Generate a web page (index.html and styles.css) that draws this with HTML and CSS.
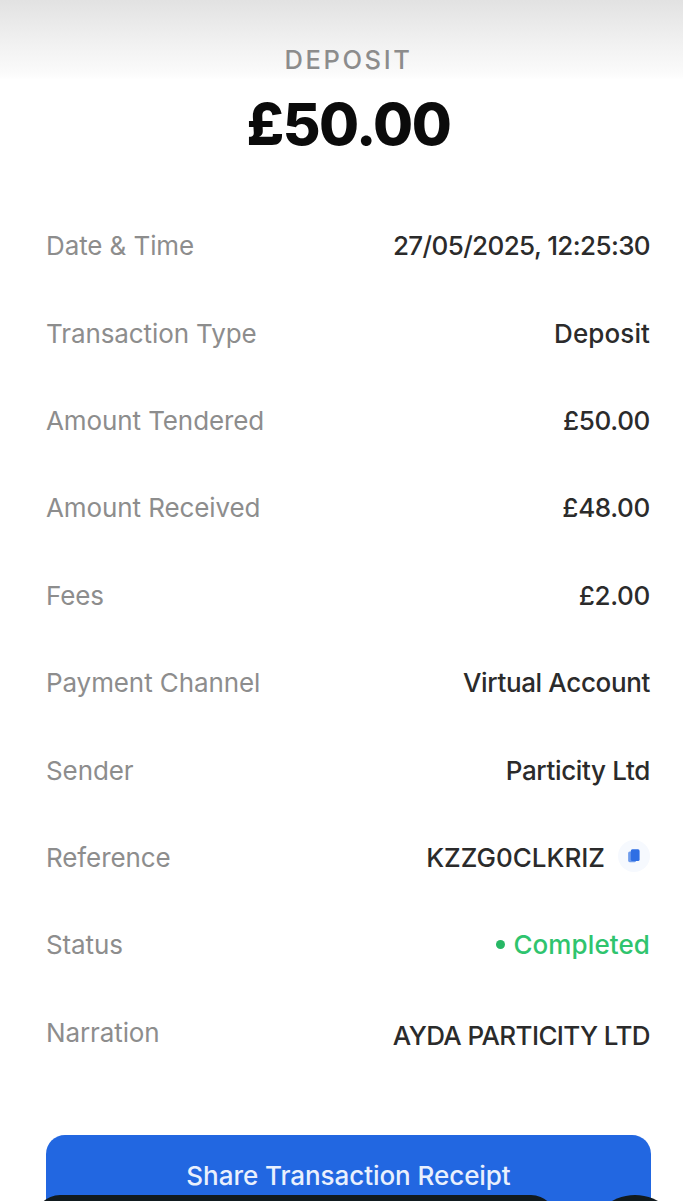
FILE: index.html
```html
<!DOCTYPE html>
<html lang="en">
<head>
<meta charset="utf-8">
<title>Deposit</title>
<link rel="stylesheet" href="styles.css">
</head>
<body>
<main class="screen">
  <header class="head">
    <div class="type">DEPOSIT</div>
    <div class="amount">£50.00</div>
  </header>
  <section class="rows">
    <div class="row"><span class="label">Date &amp; Time</span><span class="value tight">27/05/2025, 12:25:30</span></div>
    <div class="row"><span class="label">Transaction Type</span><span class="value loose">Deposit</span></div>
    <div class="row"><span class="label">Amount Tendered</span><span class="value">£50.00</span></div>
    <div class="row"><span class="label">Amount Received</span><span class="value">£48.00</span></div>
    <div class="row"><span class="label">Fees</span><span class="value">£2.00</span></div>
    <div class="row"><span class="label">Payment Channel</span><span class="value">Virtual Account</span></div>
    <div class="row"><span class="label">Sender</span><span class="value">Particity Ltd</span></div>
    <div class="row"><span class="label">Reference</span><span class="value ref">KZZG0CLKRIZ<span class="copy"><svg width="16" height="16" viewBox="0 0 12 12"><rect x="1.6" y="2.6" width="6" height="8" rx="1.2" fill="#6f9cec"/><rect x="3.6" y="1" width="6.6" height="8.8" rx="1.2" fill="#2f6fe4"/></svg></span></span></div>
    <div class="row"><span class="label">Status</span><span class="value done"><span class="dot"></span>Completed</span></div>
    <div class="row"><span class="label">Narration</span><span class="value narr tight">AYDA PARTICITY LTD</span></div>
  </section>
  <div class="action"><button class="share">Share Transaction Receipt</button></div>
</main>
<div class="dock"><div class="pill"></div><div class="round"></div></div>
</body>
</html>
```
FILE: styles.css
```css
* { box-sizing: border-box; }
html, body { margin: 0; height: 1201px; overflow: hidden; background: #fff; }
body { font-family: Inter, "Liberation Sans", sans-serif; position: relative; }
.screen { display: flex; flex-direction: column; height: 1201px; padding: 0 32px 0 46px; }
.screen > * { flex: none; }
.head {
  margin: 0 -32px 0 -46px;
  height: 202px;
  padding: 45px 0 0 14px;
  text-align: center;
  background: linear-gradient(#e2e2e2 0, #f0f0f0 40px, #fbfbfb 74px, #fff 80px);
}
.type { font-size: 25.5px; line-height: 30px; font-weight: 500; color: #8c8c8c; letter-spacing: 2.6px; }
.amount { font-size: 58px; line-height: 70px; font-weight: 800; color: #0b0b0b; letter-spacing: -1.5px; margin-top: 14px; }
.rows { display: flex; flex-direction: column; padding-right: 1px; }
.row { height: 87.4px; flex: none; display: flex; justify-content: space-between; align-items: center; font-size: 26px; }
.label { color: #8d8d8d; font-weight: 400; letter-spacing: -0.1px; }
.value { color: #2b2b2b; font-weight: 500; letter-spacing: -0.35px; }
.tight { letter-spacing: -0.62px; }
.loose { letter-spacing: 0.1px; }
.ref { display: flex; align-items: center; gap: 13px; letter-spacing: 0; }
.copy { width: 32px; height: 32px; border-radius: 50%; background: #f6f9fe; display: flex; align-items: center; justify-content: center; margin-top: -2px; }
.done { color: #2fc46e; display: flex; align-items: center; gap: 8px; letter-spacing: 0.1px; }
.dot { width: 9px; height: 9px; border-radius: 50%; background: #27b765; }
.narr { position: relative; top: 3px; }
.action { margin-top: 59px; }
.share { width: 605px; height: 100px; border: 0; border-radius: 19px; background: #2267e1; color: #e9f0fd; font: 500 26px Inter, "Liberation Sans", sans-serif; padding: 0 0 18px; letter-spacing: -0.06px; }
.dock { position: absolute; left: 0; right: 0; bottom: 0; height: 6px; overflow: hidden; }
.pill { position: absolute; left: 35px; top: 0; width: 521px; height: 50px; border-radius: 25px; background: #111a1e; }
.round { position: absolute; left: 588px; top: 0; width: 94px; height: 94px; border-radius: 50%; background: #111a1e; }
```
